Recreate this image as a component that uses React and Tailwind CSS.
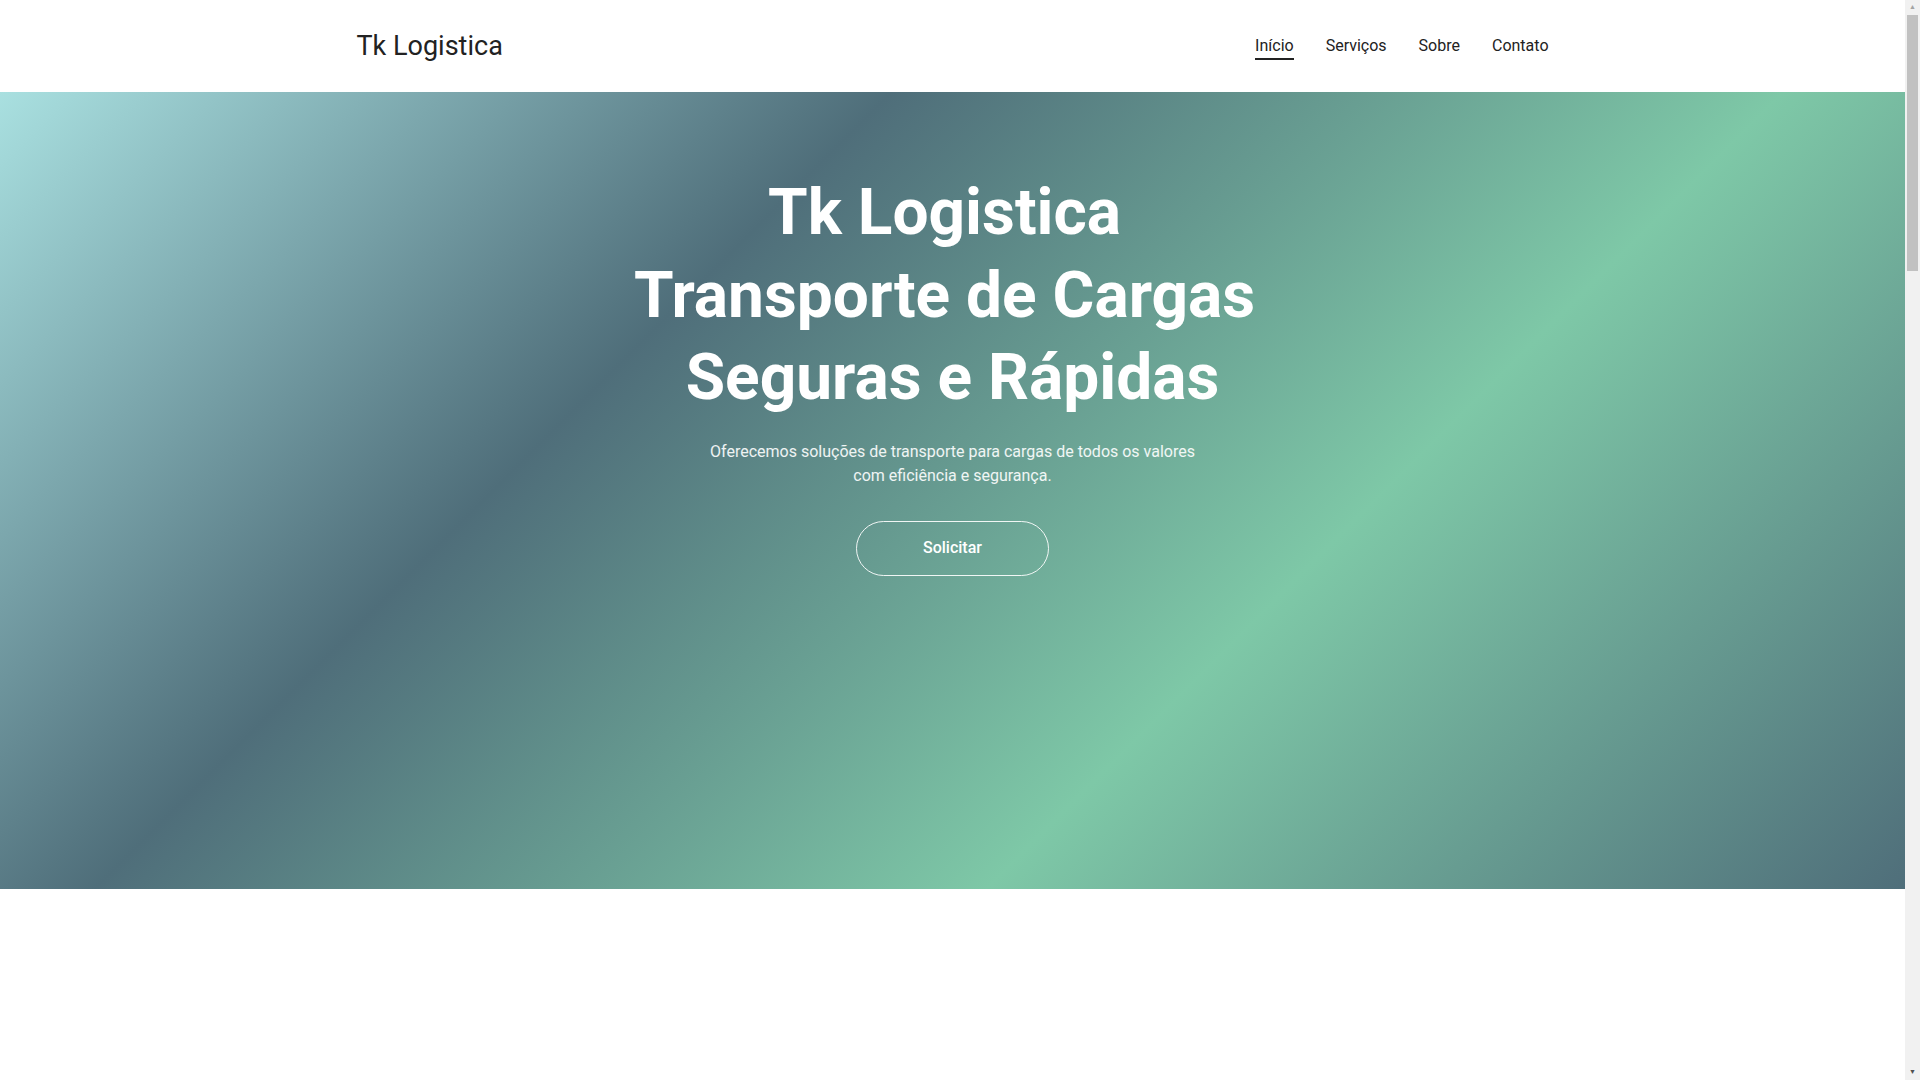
import React from "react";

export default function App() {
  return (
    <div className="min-h-screen w-[1905px] bg-white font-['Roboto',_'Liberation_Sans',_sans-serif]">
      <header className="h-[92px] bg-white">
        <div className="mx-auto flex h-full max-w-[1192px] items-center justify-between">
          <a className="text-[27px] leading-none font-normal text-[#222222]">Tk Logistica</a>
          <nav className="flex items-center gap-8 text-[16px] text-[#222222]">
            <a className="relative leading-6">
              Início
              <span className="absolute left-0 right-0 top-[24px] h-[2px] bg-[#222222]"></span>
            </a>
            <a className="leading-6">Serviços</a>
            <a className="leading-6">Sobre</a>
            <a className="leading-6">Contato</a>
          </nav>
        </div>
      </header>
      <section className="flex h-[797px] flex-col items-center pt-[80px] bg-[linear-gradient(135deg,#a9e0e0_0%,#4f6e7a_33%,#7ec8a7_66%,#4f6e7a_100%)]">
        <h1 className="text-center text-[64px] font-bold leading-[82.5px] text-white">
          Tk Logistica{"\u00a0"}
          <br />
          Transporte de Cargas{"\u00a0"}
          <br />
          Seguras e Rápidas
        </h1>
        <p className="mt-[20px] max-w-[500px] text-center text-[16px] leading-[24.5px] text-white/90">
          Oferecemos soluções de transporte para cargas de todos os valores com eficiência e segurança.
        </p>
        <button className="mt-[32px] flex h-[55px] w-[193px] items-center justify-center rounded-full border border-white/90 text-[16px] font-medium text-white">
          Solicitar
        </button>
      </section>
      <div className="h-[300px] bg-white"></div>

      <div className="fixed right-0 top-0 flex h-screen w-[15px] flex-col items-center bg-[#f1f1f1]">
        <div className="flex h-[15px] w-full items-center justify-center text-[7px] leading-none text-[#a3a3a3]">▲</div>
        <div className="h-[256px] w-[11px] bg-[#c1c1c1]"></div>
        <div className="flex-1"></div>
        <div className="flex h-[15px] w-full items-center justify-center text-[7px] leading-none text-[#505050]">▼</div>
      </div>
    </div>
  );
}
